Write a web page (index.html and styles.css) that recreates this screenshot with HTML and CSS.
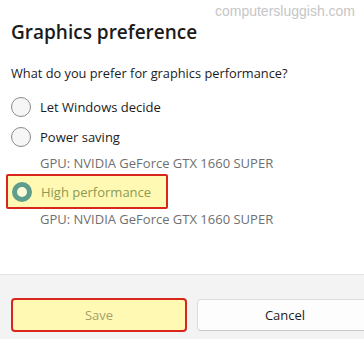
FILE: index.html
```html
<!DOCTYPE html>
<html>
<head>
<meta charset="utf-8">
<link rel="stylesheet" href="styles.css">
</head>
<body>
<div class="dialog">
  <div class="watermark">computersluggish.com</div>
  <div class="content">
    <h1 class="title">Graphics preference</h1>
    <p class="question">What do you prefer for graphics performance?</p>
    <div class="options">
      <div class="option">
        <span class="radio"></span>
        <span class="label">Let Windows decide</span>
      </div>
      <div class="option">
        <span class="radio"></span>
        <span class="label">Power saving</span>
      </div>
      <div class="gpu">GPU: NVIDIA GeForce GTX 1660 SUPER</div>
      <div class="option option-selected">
        <span class="radio radio-checked"></span>
        <span class="label">High performance</span>
      </div>
      <div class="gpu gpu-last">GPU: NVIDIA GeForce GTX 1660 SUPER</div>
    </div>
  </div>
  <div class="footer">
    <button class="btn btn-save">Save</button>
    <button class="btn btn-cancel">Cancel</button>
  </div>
</div>
</body>
</html>
```
FILE: styles.css
```css
html, body {
  margin: 0;
  padding: 0;
  background: #ffffff;
  width: 364px;
  height: 339px;
  overflow: hidden;
}
body {
  font-family: "Open Sans", "Noto Sans", sans-serif;
  color: #1b1b1b;
}
.dialog {
  width: 364px;
  height: 339px;
  display: flex;
  flex-direction: column;
  overflow: hidden;
}
.watermark {
  height: 20px;
  line-height: 22px;
  text-align: right;
  padding-right: 9px;
  font-size: 14px;
  color: #c6c6c6;
  font-family: "Liberation Sans", sans-serif;
}
.content {
  padding: 0 11px;
  flex: 1;
}
.title {
  margin: -2px 0 0 0;
  font-size: 19px;
  font-weight: 600;
  line-height: 28px;
  color: #1b1b1b;
}
.question {
  margin: 17px 0 0 0;
  font-size: 12.8px;
  line-height: 20px;
}
.options {
  margin-top: 9px;
}
.option {
  display: flex;
  align-items: center;
  gap: 9px;
  height: 30px;
  font-size: 13px;
}
.radio {
  box-sizing: border-box;
  width: 20px;
  height: 20px;
  border-radius: 50%;
  border: 1px solid #8a8a8a;
  background: #f6f6f6;
  flex: none;
}
.radio-checked {
  border: 5px solid #5f9e8d;
  background: #fdfbd8;
}
.gpu {
  padding-left: 29px;
  font-size: 13px;
  color: #6f6f6f;
  height: 22px;
  line-height: 22px;
}
.gpu-last {
  height: 20px;
  line-height: 20px;
}
.option-selected {
  margin-left: -5px;
  padding-left: 4px;
  width: 154px;
  height: 31px;
  border: 2px solid #d9261c;
  border-radius: 2px;
  background: #fff9b3;
  color: #8c9a55;
}
.footer {
  height: 65px;
  flex: none;
  border-top: 1px solid #e3e3e3;
  background: #f3f3f3;
  display: grid;
  grid-template-columns: 176px 176px;
  column-gap: 10px;
  padding: 24px 0 0 11px;
  box-sizing: border-box;
  align-items: start;
}
.btn {
  font-family: inherit;
  font-size: 13px;
  height: 32px;
  border-radius: 4px;
  margin: 0;
}
.btn-save {
  background: #fff9b3;
  border: 2px solid #d9261c;
  color: #a59f6c;
  height: 34px;
  margin-top: -1px;
}
.btn-cancel {
  background: #fdfdfd;
  border: 1px solid #dcdcdc;
  border-bottom-color: #c9c9c9;
  color: #1b1b1b;
}
```
